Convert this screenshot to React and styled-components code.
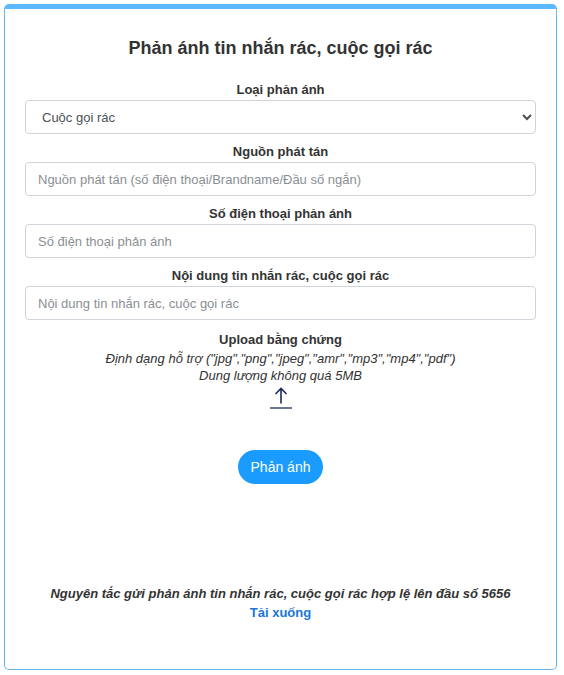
import React from 'react'
import styled, { createGlobalStyle } from 'styled-components'

const Global = createGlobalStyle`
  body {
    margin: 0;
    padding: 4px 7px 5px 4px;
    background: #fff;
    font-family: "Liberation Sans", Arial, sans-serif;
    color: #333;
  }
  * { box-sizing: border-box; }
`

const Card = styled.div`
  height: 666px;
  border: 1px solid #64b5f0;
  border-top: 5px solid #5cb8ff;
  border-radius: 5px;
  padding: 28px 20px 0;
  display: flex;
  flex-direction: column;
  align-items: stretch;
`

const Title = styled.h2`
  margin: 0 0 21px;
  font-size: 18px;
  line-height: 22px;
  font-weight: bold;
  text-align: center;
  color: #333;
`

const Group = styled.div`
  display: flex;
  flex-direction: column;
  margin-bottom: 8px;
`

const Label = styled.label`
  font-size: 13px;
  line-height: 20px;
  font-weight: bold;
  text-align: center;
  color: #333;
`

const fieldStyle = `
  height: 34px;
  width: 100%;
  border: 1px solid #ced4da;
  border-radius: 4px;
  font-family: "Liberation Sans", Arial, sans-serif;
  font-size: 13px;
  color: #495057;
  background: #fff;
  outline: none;
`

const Select = styled.select`
  ${fieldStyle}
  padding: 0 10px 0 12px;
`

const Input = styled.input`
  ${fieldStyle}
  padding: 0 12px;
  &::placeholder { color: #8a8f94; }
`

const Upload = styled.div`
  margin-top: 2px;
  display: flex;
  flex-direction: column;
  align-items: center;
`

const Hint = styled.div`
  font-size: 13px;
  line-height: 17px;
  font-style: italic;
  color: #333;
`

const UploadIcon = styled.svg`
  display: block;
  margin-top: 2px;
  cursor: pointer;
`

const SubmitButton = styled.button`
  align-self: center;
  margin-top: 40px;
  height: 34px;
  padding: 0 13px;
  border: none;
  border-radius: 17px;
  background: #1a9cff;
  color: #fff;
  font-family: "Liberation Sans", Arial, sans-serif;
  font-size: 14px;
  cursor: pointer;
`

const Footer = styled.div`
  margin-top: 100px;
  text-align: center;
`

const Rule = styled.div`
  font-size: 13px;
  line-height: 19px;
  font-weight: bold;
  font-style: italic;
  color: #333;
`

const Download = styled.a`
  font-size: 13px;
  line-height: 19px;
  font-weight: bold;
  color: #1877d6;
  text-decoration: none;
`

const fields = [
  { label: 'Nguồn phát tán', placeholder: 'Nguồn phát tán (số điện thoại/Brandname/Đầu số ngắn)' },
  { label: 'Số điện thoại phản ánh', placeholder: 'Số điện thoại phản ánh' },
  { label: 'Nội dung tin nhắn rác, cuộc gọi rác', placeholder: 'Nội dung tin nhắn rác, cuộc gọi rác' },
]

const App = () => {
  return (
    <>
      <Global />
      <Card>
        <Title>Phản ánh tin nhắn rác, cuộc gọi rác</Title>
        <Group>
          <Label>Loại phản ánh</Label>
          <Select defaultValue="call">
            <option value="call">Cuộc gọi rác</option>
            <option value="sms">Tin nhắn rác</option>
          </Select>
        </Group>
        {fields.map(f => (
          <Group key={f.label}>
            <Label>{f.label}</Label>
            <Input placeholder={f.placeholder} />
          </Group>
        ))}
        <Upload>
          <Label>Upload bằng chứng</Label>
          <Hint>Định dạng hỗ trợ ("jpg","png","jpeg","amr","mp3","mp4","pdf")</Hint>
          <Hint>Dung lượng không quá 5MB</Hint>
          <UploadIcon width="24" height="24" viewBox="0 0 24 24">
            <path d="M12 2.5V17.5M6.5 8L12 2.5L17.5 8" fill="none" stroke="#1f2a55" strokeWidth="1.6" />
            <path d="M1 22H23" stroke="#1f2a55" strokeWidth="1.3" />
          </UploadIcon>
        </Upload>
        <SubmitButton>Phản ánh</SubmitButton>
        <Footer>
          <Rule>Nguyên tắc gửi phản ánh tin nhắn rác, cuộc gọi rác hợp lệ lên đầu số 5656</Rule>
          <Download href="#">Tải xuống</Download>
        </Footer>
      </Card>
    </>
  )
}

export default App
